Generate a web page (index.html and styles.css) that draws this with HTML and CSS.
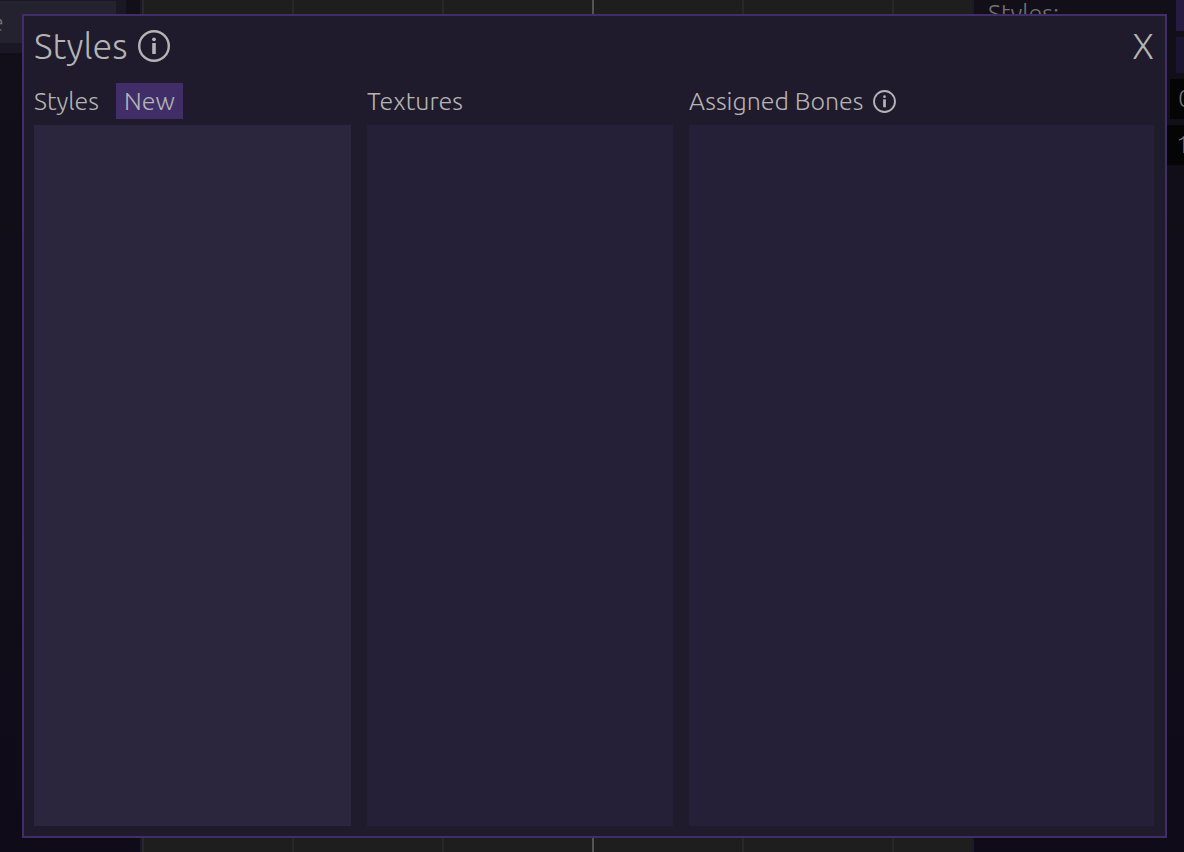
FILE: index.html
```html
<!DOCTYPE html>
<html lang="en">
<head>
<meta charset="utf-8">
<title>Styles</title>
<link rel="stylesheet" href="styles.css">
</head>
<body>
<div class="editor">
  <aside class="side left">
    <div class="tree"><div class="tree-row">e</div></div>
  </aside>
  <main class="canvas"></main>
  <aside class="side right">
    <div class="prop"><span class="prop-label">Styles:</span><span class="swatch bright"></span></div>
    <div class="prop"><span class="swatch dim"></span></div>
    <div class="prop field-row"><span class="field short">0</span></div>
    <div class="prop field-row"><span class="field">1</span></div>
  </aside>
</div>
<section class="modal" role="dialog" aria-labelledby="title">
  <header class="modal-head">
    <h1 id="title">Styles</h1>
    <svg class="info large" viewBox="0 0 32 32" role="img" aria-label="Info"><circle cx="16" cy="16" r="14.8" fill="none" stroke="currentColor" stroke-width="2.4"/><circle cx="16" cy="9.3" r="1.9" fill="currentColor"/><path d="M14.2 13h3.6v11h-3.6z" fill="currentColor"/></svg>
    <button class="close" type="button">X</button>
  </header>
  <div class="columns">
    <section class="column">
      <div class="column-head"><h2>Styles</h2><button class="new" type="button">New</button></div>
      <div class="list active"></div>
    </section>
    <section class="column">
      <div class="column-head"><h2>Textures</h2></div>
      <div class="list"></div>
    </section>
    <section class="column">
      <div class="column-head bones"><h2>Assigned Bones</h2>
        <svg class="info" viewBox="0 0 32 32" role="img" aria-label="Info"><circle cx="16" cy="16" r="14.6" fill="none" stroke="currentColor" stroke-width="2.6"/><circle cx="16" cy="9.3" r="1.9" fill="currentColor"/><path d="M14.1 13h3.8v11h-3.8z" fill="currentColor"/></svg>
      </div>
      <div class="list"></div>
    </section>
  </div>
</section>
</body>
</html>
```
FILE: styles.css
```css
* { box-sizing: border-box; }

body {
  margin: 0;
  height: 100vh;
  position: relative;
  overflow: hidden;
  background: #0f0b18;
  color: #b4b4b4;
  font-family: Ubuntu, "Open Sans", "Noto Sans", sans-serif;
  font-weight: 300;
  font-size: 25px;
  line-height: 36px;
}

h1, h2 { margin: 0; font-weight: inherit; font-size: inherit; }

button {
  border: 0;
  padding: 0;
  background: none;
  color: inherit;
  font: inherit;
}

/* Dimmed editor behind the dialog */
.editor {
  display: grid;
  grid-template-columns: 142px 1fr 210px;
  height: 100%;
  color: #737373;
}

.side {
  background: linear-gradient(#130f19, #0f0b18);
  overflow: hidden;
}

.left { border-right: 2px solid #1b1828; }

.tree {
  width: 126px;
  padding: 1px 10px 10px 0;
  background: #1b1825;
}

.tree-row {
  height: 42px;
  background: #24222e;
  display: flex;
  align-items: center;
  text-indent: -10px;
}

.canvas {
  background:
    linear-gradient(90deg, transparent 450px, #545454 450px 452px, transparent 452px),
    repeating-linear-gradient(90deg, #282828 0 2px, #1e1e1e 2px 150px);
  border-right: 2px solid #1b1828;
}

.prop {
  display: flex;
  height: 31px;
  margin-bottom: 6px;
  padding-left: 14px;
}

.prop-label { line-height: 26px; }

.swatch {
  width: 8px;
  height: 31px;
  margin-left: auto;
  background: #261b40;
}

.swatch.dim { height: 36px; background: #1c1530; }

.field-row { height: 40px; padding: 0; }

.prop:nth-child(2) { height: 36px; }

.field {
  width: 20px;
  margin-left: auto;
  padding-left: 12px;
  line-height: 38px;
  background: #050505;
  overflow: hidden;
}

.field.short { width: 14px; padding-left: 8px; }

/* Dialog */
.modal {
  position: absolute;
  inset: 14px 17px 14px 22px;
  display: flex;
  flex-direction: column;
  padding: 8px 11px 10px 10px;
  background: #1f1a2c;
  border: 2px solid #412e68;
}

.modal-head {
  display: flex;
  align-items: center;
  gap: 10px;
  height: 44px;
  font-size: 36px;
  line-height: 44px;
}

.close { margin-left: auto; }

.info { width: 23px; height: 23px; flex: none; }

.info.large { width: 32px; height: 32px; }

.columns {
  flex: 1;
  display: grid;
  grid-template-columns: 317fr 306fr 465fr;
  gap: 16px;
  padding-top: 15px;
}

.column {
  display: flex;
  flex-direction: column;
  gap: 6px;
  min-width: 0;
}

.column-head {
  display: flex;
  align-items: center;
  gap: 17px;
  height: 36px;
  white-space: nowrap;
}

.bones { gap: 10px; }

.new {
  height: 36px;
  padding: 0 8px;
  background: #412e68;
}

.list { flex: 1; background: #252038; }

.list.active { background: #2b253d; }
```
